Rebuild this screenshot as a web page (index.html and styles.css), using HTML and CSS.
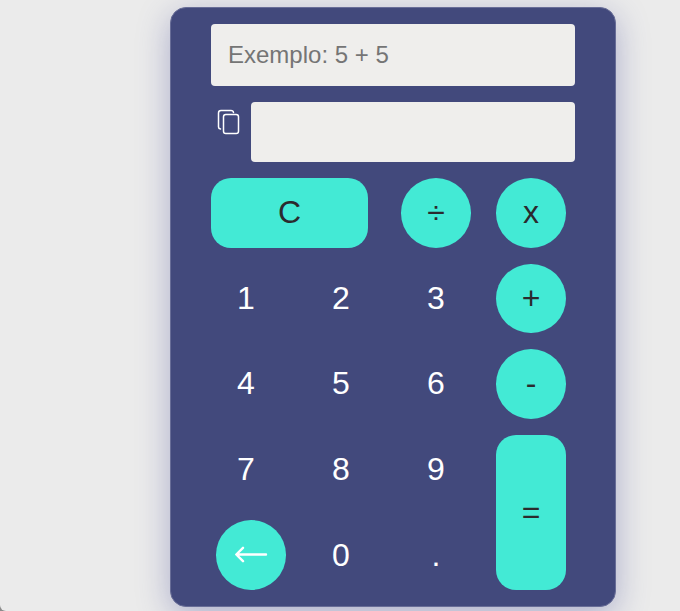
FILE: index.html
```html
<!DOCTYPE html>
<html lang="pt-BR">
<head>
  <meta charset="utf-8">
  <meta name="viewport" content="width=device-width, initial-scale=1">
  <title>Calculadora</title>
  <link rel="stylesheet" href="styles.css">
</head>
<body>
  <main class="calculator">
    <input class="field" type="text" placeholder="Exemplo: 5 + 5" aria-label="Expressão">
    <div class="result">
      <button class="copy" type="button" aria-label="Copiar resultado">
        <svg width="24" height="26" viewBox="0 0 24 26" fill="none" stroke="currentColor" stroke-width="1.5" stroke-linecap="round">
          <path d="M3.5 20C1.800 19.800 1.500 19 1.500 18V4C1.500 2.200 2.200 1.500 4 1.500H14C15.500 1.500 16.300 2 16.500 3.500"/>
          <rect x="6.500" y="5.500" width="15" height="19" rx="2.300"/>
        </svg>
      </button>
      <input class="field field-result" type="text" readonly aria-label="Resultado">
    </div>
    <div class="keys">
      <button class="key action clear" type="button">C</button>
      <button class="key action" type="button">÷</button>
      <button class="key action" type="button">x</button>
      <button class="key" type="button">1</button>
      <button class="key" type="button">2</button>
      <button class="key" type="button">3</button>
      <button class="key action" type="button">+</button>
      <button class="key" type="button">4</button>
      <button class="key" type="button">5</button>
      <button class="key" type="button">6</button>
      <button class="key action" type="button">-</button>
      <button class="key" type="button">7</button>
      <button class="key" type="button">8</button>
      <button class="key" type="button">9</button>
      <button class="key action equals" type="button">=</button>
      <button class="key action back" type="button" aria-label="Apagar">
        <svg width="34" height="20" viewBox="0 0 34 20" fill="none" stroke="currentColor" stroke-width="2.4" stroke-linecap="round" stroke-linejoin="round">
          <path d="M32 9.500H2.500M9 2.800L2.300 9.500L9 16.200"/>
        </svg>
      </button>
      <button class="key" type="button">0</button>
      <button class="key" type="button">.</button>
    </div>
  </main>
</body>
</html>
```
FILE: styles.css
```css
* {
  box-sizing: border-box;
}

html {
  background: #8c8c8c;
}

body {
  display: flow-root;
  min-height: 100vh;
  margin: 0;
  background: #ebebeb;
  border-bottom-left-radius: 6px;
  font-family: "Liberation Sans", Arial, sans-serif;
  overflow: hidden;
}

.calculator {
  display: flex;
  flex-direction: column;
  gap: 16px;
  max-width: 446px;
  margin: 7px 0 3px 25%;
  padding: 16px 40px;
  border: 1px solid #686d97;
  border-radius: 16px;
  background: #42497c;
  box-shadow: 0 8px 32px rgba(66, 70, 150, 0.37);
}

.field {
  width: 100%;
  min-width: 0;
  height: 62px;
  padding: 0 17px;
  border: 0;
  border-radius: 4px;
  background: #efeeec;
  color: #2b2b2e;
  font: inherit;
  font-size: 24px;
}

.field::placeholder {
  color: #757575;
  opacity: 1;
}

.result {
  display: flex;
  align-items: flex-start;
}

.field-result {
  flex: 1;
  height: 60px;
}

.copy {
  display: flex;
  flex: none;
  justify-content: center;
  width: 40px;
  padding: 7px 4px 0 0;
  border: 0;
  background: none;
  color: #fff;
}

.keys {
  display: grid;
  grid-template-columns: repeat(4, 70px);
  grid-template-rows: repeat(5, 1fr);
  gap: 16px 25px;
  height: 412px;
}

.key {
  display: flex;
  align-items: center;
  justify-content: center;
  padding: 0;
  border: 0;
  border-radius: 50%;
  background: none;
  color: #fff;
  font: inherit;
  font-size: 32px;
}

.action {
  background: #43ead5;
  color: #2b2b2e;
}

.clear {
  grid-column: span 2;
  width: 157px;
  border-radius: 20px;
}

.equals {
  grid-row: span 2;
  border-radius: 20px;
}

.back {
  width: 70px;
  margin-left: 5px;
  color: #fff;
}
```
